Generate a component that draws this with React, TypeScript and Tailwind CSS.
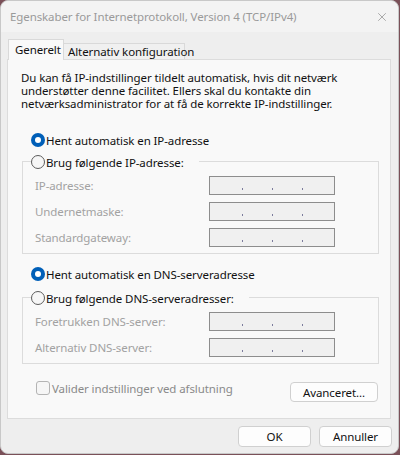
import { X } from 'lucide-react';

// Windows IPv4 properties dialog (Danish)
const Radio = ({ checked }: { checked?: boolean }) =>
  checked ? (
    <span className="flex h-[14px] w-[14px] shrink-0 items-center justify-center rounded-full bg-[#005fb8]">
      <span className="h-[6px] w-[6px] rounded-full bg-white" />
    </span>
  ) : (
    <span className="h-[14px] w-[14px] shrink-0 rounded-full border border-[#5c5c5c] bg-[#f6f6f6]" />
  );

const IpBox = () => (
  <div className="flex h-[19px] w-[126px] items-end border border-[#8d8d8d] bg-[#f0f0f0] pb-[4px]">
    <span className="w-[32px]" />
    <span className="h-[2px] w-[1px] bg-[#7b7b9c]" />
    <span className="w-[29px]" />
    <span className="h-[2px] w-[1px] bg-[#7b7b9c]" />
    <span className="w-[29px]" />
    <span className="h-[2px] w-[1px] bg-[#7b7b9c]" />
  </div>
);

const Field = ({ label }: { label: string }) => (
  <div className="flex h-[19px] items-center">
    <span className="w-[174px] text-[#a2a2a2]">{label}</span>
    <IpBox />
  </div>
);

const Group = ({ title, fields, top }: { title: string; fields: string[]; top: string }) => (
  <div className={`ml-[1px] w-[357px] border border-[#dcdcdc] pb-[6px] pl-[12px] ${top}`}>
    <div className="-mt-[8px] -ml-[12px] flex h-[16px]">
      <span className="ml-[8px] flex items-center gap-[1px] bg-[#f9f9f9] pr-[15px]">
        <Radio />
        <span>{title}</span>
      </span>
    </div>
    <div className="mt-[6px] flex flex-col gap-[7px]">
      {fields.map((f) => (
        <Field key={f} label={f} />
      ))}
    </div>
  </div>
);

export default function App() {
  return (
    <div className="h-[455px] w-[400px] bg-[#7a5058] font-['Noto_Sans',sans-serif] text-[11.5px] leading-[13px] tracking-[-0.1px] text-[#111111]">
      <div className="flex h-[454px] w-[399px] flex-col rounded-[8px] border border-[#c8c8c8] bg-[#eeeeee]">
        {/* title bar */}
        <div className="flex h-[31px] items-center justify-between rounded-t-[8px] bg-[#f3f3f3] pl-[9px] pr-[9px]">
          <span className="text-[#9a9a9a]">Egenskaber for Internetprotokoll, Version 4 (TCP/IPv4)</span>
          <X size={14} strokeWidth={1.2} className="text-[#8a8a8a]" />
        </div>

        {/* tabs */}
        <div className="mt-[7px] flex items-end pl-[7px]">
          <div className="relative z-10 -mb-px flex h-[21px] w-[56px] items-center border border-b-0 border-[#d9d9d9] bg-[#f9f9f9] pb-[2px] pl-[6px]">
            Generelt
          </div>
          <div className="flex h-[16px] w-[121px] items-center whitespace-nowrap border border-b-0 border-l-0 border-[#d9d9d9] bg-[#f0f0f0] pl-[4px]">
            Alternativ konfiguration
          </div>
        </div>

        {/* panel */}
        <div className="ml-[6px] flex h-[360px] w-[384px] flex-col border border-[#dcdcdc] bg-[#f9f9f9] pl-[13px] pt-[11px]">
          <p>
            Du kan få IP-indstillinger tildelt automatisk, hvis dit netværk
            <br />
            understøtter denne facilitet. Ellers skal du kontakte din
            <br />
            netværksadministrator for at få de korrekte IP-indstillinger.
          </p>

          <div className="ml-[10px] mt-[22px] flex h-[16px] items-center gap-[1px]">
            <Radio checked />
            <span>Hent automatisk en IP-adresse</span>
          </div>

          <Group top="mt-[13px]" title="Brug følgende IP-adresse:" fields={['IP-adresse:', 'Undernetmaske:', 'Standardgateway:']} />

          <div className="ml-[10px] mt-[12px] flex h-[16px] items-center gap-[1px]">
            <Radio checked />
            <span>Hent automatisk en DNS-serveradresse</span>
          </div>

          <Group top="mt-[15px]" title="Brug følgende DNS-serveradresser:" fields={['Foretrukken DNS-server:', 'Alternativ DNS-server:']} />

          <div className="mt-[16px] flex w-[357px] items-start justify-between">
            <label className="ml-[15px] flex h-[16px] items-center gap-[2px] text-[#8a8a8a]">
              <span className="h-[14px] w-[14px] rounded-[3px] border border-[#b4b4b4] bg-[#f6f6f6]" />
              Valider indstillinger ved afslutning
            </label>
            <button className="mt-[2px] h-[20px] w-[88px] rounded-[4px] border border-[#d0d0d0] bg-[#fdfdfd]">
              Avanceret...
            </button>
          </div>
        </div>

        {/* footer */}
        <div className="mt-[7px] flex justify-end gap-[8px] pr-[6px]">
          <button className="h-[21px] w-[73px] rounded-[4px] border border-[#d0d0d0] bg-[#fdfdfd]">OK</button>
          <button className="h-[21px] w-[73px] rounded-[4px] border border-[#d0d0d0] bg-[#fdfdfd]">Annuller</button>
        </div>
      </div>
    </div>
  );
}
